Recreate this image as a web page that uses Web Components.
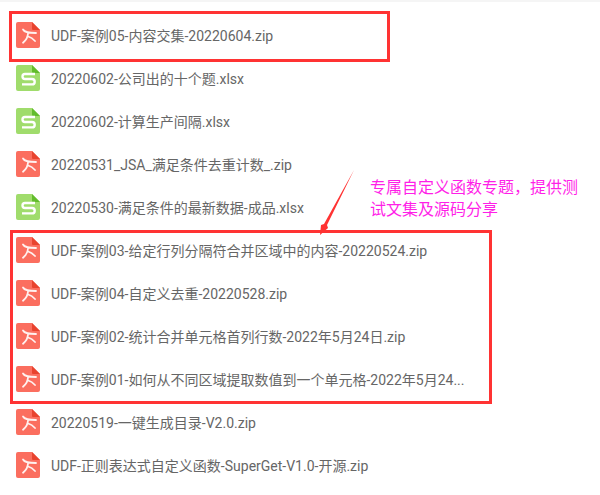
<!DOCTYPE html>
<html>
<head>
<meta charset="utf-8">
<style>
	html, body { margin: 0; padding: 0; background: #fff; }
	body { width: 600px; height: 495px; overflow: hidden; }
</style>
</head>
<body>
<file-list>
	<file-row type="zip">UDF-案例05-内容交集-20220604.zip</file-row>
	<file-row type="xlsx">20220602-公司出的十个题.xlsx</file-row>
	<file-row type="xlsx">20220602-计算生产间隔.xlsx</file-row>
	<file-row type="zip">20220531_JSA_满足条件去重计数_.zip</file-row>
	<file-row type="xlsx">20220530-满足条件的最新数据-成品.xlsx</file-row>
	<file-row type="zip">UDF-案例03-给定行列分隔符合并区域中的内容-20220524.zip</file-row>
	<file-row type="zip">UDF-案例04-自定义去重-20220528.zip</file-row>
	<file-row type="zip">UDF-案例02-统计合并单元格首列行数-2022年5月24日.zip</file-row>
	<file-row type="zip">UDF-案例01-如何从不同区域提取数值到一个单元格-2022年5月24...</file-row>
	<file-row type="zip">20220519-一键生成目录-V2.0.zip</file-row>
	<file-row type="zip">UDF-正则表达式自定义函数-SuperGet-V1.0-开源.zip</file-row>
	<mark-box slot="over" style="left:9px;top:9px;width:375px;height:45px"></mark-box>
	<mark-box slot="over" style="left:10px;top:228px;width:476px;height:168px"></mark-box>
	<mark-arrow slot="over"></mark-arrow>
	<mark-note slot="over">专属自定义函数专题，提供测试文集及源码分享</mark-note>
</file-list>
<script>
const ICONS = {
	zip: `<svg width="24" height="26" viewBox="0 0 24 26">
		<path d="M2 0H16L24 8V24a2 2 0 0 1-2 2H2a2 2 0 0 1-2-2V2a2 2 0 0 1 2-2Z" fill="#fb6e5f"/>
		<path d="M16 0L24 8H17a1 1 0 0 1-1-1Z" fill="#e8432f"/>
		<path d="M7 7.5C8.5 10 11 11 20 11M12 11C12 14.5 10.5 17.8 7 20.7M12.2 14.5C14.5 15.2 17 16.8 19 19" fill="none" stroke="#fff" stroke-opacity=".9" stroke-width="1.8" stroke-linecap="round"/>
	</svg>`,
	xlsx: `<svg width="24" height="26" viewBox="0 0 24 26">
		<path d="M2 0H16L24 8V24a2 2 0 0 1-2 2H2a2 2 0 0 1-2-2V2a2 2 0 0 1 2-2Z" fill="#a0dc6c"/>
		<path d="M16 0L24 8H17a1 1 0 0 1-1-1Z" fill="#62bc2c"/>
		<path d="M19 9H9a2.5 2.5 0 0 0 0 5H16a2.5 2.5 0 0 1 0 5.4H6" fill="none" stroke="#fff" stroke-width="2.4"/>
	</svg>`
};

customElements.define("file-list",
	class extends HTMLElement {
		constructor(){
			super();
			this.attachShadow({ mode: "open" }).innerHTML = `
				<style>
					:host { display: block; position: relative; width: 600px; height: 495px; box-sizing: border-box; padding-top: 11px; border-top: 2px solid #f5f5f5; }
					.rows { display: flex; flex-direction: column; }
				</style>
				<div class="rows"><slot></slot></div>
				<slot name="over"></slot>
			`;
		}
	}
);

customElements.define("file-row",
	class extends HTMLElement {
		connectedCallback(){
			this.attachShadow({ mode: "open" }).innerHTML = `
				<style>
					:host { display: flex; align-items: center; height: 43px; padding-left: 16px; gap: 11px; font: 14px Roboto, "Noto Sans CJK SC", sans-serif; color: #666; white-space: nowrap; }
					svg { display: block; flex: none; }
				</style>
				${ICONS[this.getAttribute("type")]}
				<span><slot></slot></span>
			`;
		}
	}
);

customElements.define("mark-box",
	class extends HTMLElement {
		constructor(){
			super();
			this.attachShadow({ mode: "open" }).innerHTML = `
				<style>
					:host { display: block; position: absolute; border: 3px solid #ff3333; }
				</style>
			`;
		}
	}
);

customElements.define("mark-arrow",
	class extends HTMLElement {
		constructor(){
			super();
			this.attachShadow({ mode: "open" }).innerHTML = `
				<style>
					:host { display: block; position: absolute; left: 310px; top: 163px; }
					svg { display: block; }
				</style>
				<svg width="50" height="72" viewBox="0 0 50 72">
					<path d="M44 5L17 60L18 63L10 70L11 60L14 59Z" fill="#ff3333"/>
				</svg>
			`;
		}
	}
);

customElements.define("mark-note",
	class extends HTMLElement {
		constructor(){
			super();
			this.attachShadow({ mode: "open" }).innerHTML = `
				<style>
					:host { display: block; position: absolute; left: 370px; top: 173px; width: 212px; font: 16px/22px "Noto Sans CJK SC", sans-serif; color: #ff1fe8; }
				</style>
				<slot></slot>
			`;
		}
	}
);
</script>
</body>
</html>
